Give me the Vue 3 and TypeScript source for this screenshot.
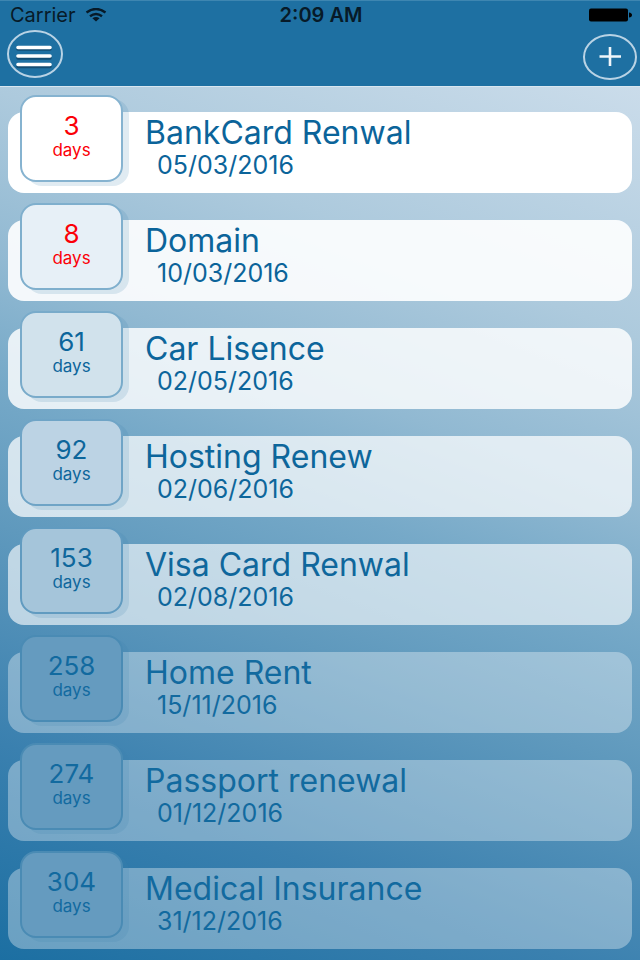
<script setup lang="ts">
interface Reminder {
  days: number
  title: string
  date: string
  level: number
}

const reminders: Reminder[] = [
  { days: 3, title: 'BankCard Renwal', date: '05/03/2016', level: 1 },
  { days: 8, title: 'Domain', date: '10/03/2016', level: 2 },
  { days: 61, title: 'Car Lisence', date: '02/05/2016', level: 3 },
  { days: 92, title: 'Hosting Renew', date: '02/06/2016', level: 4 },
  { days: 153, title: 'Visa Card Renwal', date: '02/08/2016', level: 5 },
  { days: 258, title: 'Home Rent', date: '15/11/2016', level: 6 },
  { days: 274, title: 'Passport renewal', date: '01/12/2016', level: 6 },
  { days: 304, title: 'Medical Insurance', date: '31/12/2016', level: 6 },
]
</script>

<template>
  <div class="screen">
    <header class="header">
      <div class="status">
        <div class="carrier">
          <span>Carrier</span>
          <svg class="wifi" viewBox="0 0 22 14" width="22" height="14" aria-hidden="true">
            <path d="M1.5 4.5Q11-2.5 20.5 4.5" />
            <path d="M5 8.2Q11 3.6 17 8.2" />
            <path class="dot" d="M7.4 10.3Q11 7.8 14.6 10.3L11 13.5Z" />
          </svg>
        </div>
        <span class="clock">2:09 AM</span>
        <svg class="battery" viewBox="0 0 43 14" width="43" height="14" aria-hidden="true">
          <rect x="0" y="0.5" width="39" height="13" rx="2" />
          <path d="M40 4.5Q43 5 43 7Q43 9 40 9.5Z" />
        </svg>
      </div>
      <div class="actions">
        <button class="action" type="button" aria-label="Menu">
          <svg viewBox="0 0 58 50" width="58" height="50" aria-hidden="true">
            <ellipse class="ring" cx="29" cy="25" rx="27" ry="23" />
            <path class="bar-shade" d="M12 20H44M12 29H44M12 37.5H44" />
            <path class="bar" d="M12 18.5H44M12 27H44M12 35.5H44" />
          </svg>
        </button>
        <button class="action action-add" type="button" aria-label="Add">
          <svg viewBox="0 0 56 48" width="56" height="48" aria-hidden="true">
            <ellipse class="ring" cx="28" cy="24" rx="26" ry="22" />
            <path class="plus" d="M17.5 23.5H39M28 14V33" />
          </svg>
        </button>
      </div>
    </header>

    <main>
      <ul class="list">
        <li v-for="item in reminders" :key="item.title" class="card" :class="'level-' + item.level">
          <div class="badge" :class="{ urgent: item.days < 10 }">
            <span class="count">{{ item.days }}</span>
            <span class="unit">days</span>
          </div>
          <div class="info">
            <h2 class="title">{{ item.title }}</h2>
            <time class="date">{{ item.date }}</time>
          </div>
        </li>
      </ul>
    </main>
  </div>
</template>

<style>
body {
  background: #1f70a3;
}
</style>

<style scoped>
.screen {
  min-height: 100vh;
  box-sizing: border-box;
  font-family: Inter, Roboto, "Liberation Sans", sans-serif;
  color: #0c659b;
  background: linear-gradient(
    21deg,
    #1c6fa2 0%,
    #3a80af 18%,
    #5f99bd 36%,
    #76a9c8 48%,
    #91b9d2 58%,
    #adcadd 72%,
    #ccddeb 94%
  );
}

.header {
  height: 87px;
  box-sizing: border-box;
  border-top: 1px solid #3e86b1;
  border-bottom: 1px solid #d8e6f0;
  background: #1e70a2;
}

.status {
  display: grid;
  grid-template-columns: 1fr auto 1fr;
  align-items: center;
  height: 28px;
  padding: 0 8px 0 10px;
  font-size: 20px;
  line-height: 28px;
  color: #071a28;
}

.carrier {
  display: flex;
  align-items: center;
  gap: 9px;
}

.clock {
  font-weight: 600;
}

.wifi path {
  fill: none;
  stroke: #071a28;
  stroke-width: 2.4;
}

.wifi .dot {
  fill: #071a28;
  stroke: none;
}

.battery {
  justify-self: end;
  fill: #000;
}

.actions {
  display: flex;
  justify-content: space-between;
  padding: 0 2px 0 6px;
}

.action {
  display: flex;
  padding: 0;
  border: 0;
  background: none;
  cursor: pointer;
}

.action-add {
  padding-top: 4px;
}

.ring {
  fill: none;
  stroke: #b9d3e5;
  stroke-width: 2;
}

.bar,
.bar-shade {
  fill: none;
  stroke: #fff;
  stroke-width: 3.6;
  stroke-linecap: round;
}

.bar-shade {
  stroke: #134d73;
}

.plus {
  fill: none;
  stroke: #f0f6fa;
  stroke-width: 2.6;
}

.list {
  display: flex;
  flex-direction: column;
  gap: 27px;
  margin: 0;
  padding: 25px 8px 11px;
  list-style: none;
}

.card {
  display: flex;
  align-items: flex-start;
  gap: 22px;
  height: 81px;
  box-sizing: border-box;
  padding: 0 12px;
  border-radius: 16px;
  background: var(--card);
}

.badge {
  display: flex;
  flex-direction: column;
  align-items: center;
  flex: none;
  width: 103px;
  height: 87px;
  box-sizing: border-box;
  margin-top: -17px;
  padding-top: 15px;
  border: 2px solid var(--edge);
  border-radius: 16px;
  background: var(--badge);
  box-shadow: 6px 4px 0 rgba(60, 130, 175, 0.16);
  color: var(--ink);
}

.urgent {
  color: #fb0007;
}

.count {
  font-size: 26px;
  line-height: 28px;
}

.unit {
  font-size: 17px;
  line-height: 20px;
}

.info {
  display: flex;
  flex-direction: column;
  min-width: 0;
  padding-top: 4px;
  color: var(--ink);
}

.title {
  margin: 0;
  font-size: 32px;
  font-weight: 400;
  line-height: 34px;
  white-space: nowrap;
}

.date {
  padding-left: 12px;
  font-size: 25px;
  line-height: 30px;
}

.level-1 {
  --card: #fff;
  --badge: #fff;
  --edge: #86b3d0;
  --ink: #0b649a;
}

.level-2 {
  --card: rgba(255, 255, 255, 0.9);
  --badge: #e7f0f7;
  --edge: #7fafcd;
  --ink: #0b649a;
}

.level-3 {
  --card: rgba(255, 255, 255, 0.82);
  --badge: #d1e2ec;
  --edge: #79abca;
  --ink: #0c659b;
}

.level-4 {
  --card: rgba(255, 255, 255, 0.72);
  --badge: #bcd3e4;
  --edge: #6fa4c6;
  --ink: #0d669b;
}

.level-5 {
  --card: rgba(255, 255, 255, 0.62);
  --badge: #a5c5da;
  --edge: #619bc0;
  --ink: #0f679c;
}

.level-6 {
  --card: rgba(255, 255, 255, 0.34);
  --badge: #659bbf;
  --edge: #4a8bb4;
  --ink: #126a9f;
}
</style>
